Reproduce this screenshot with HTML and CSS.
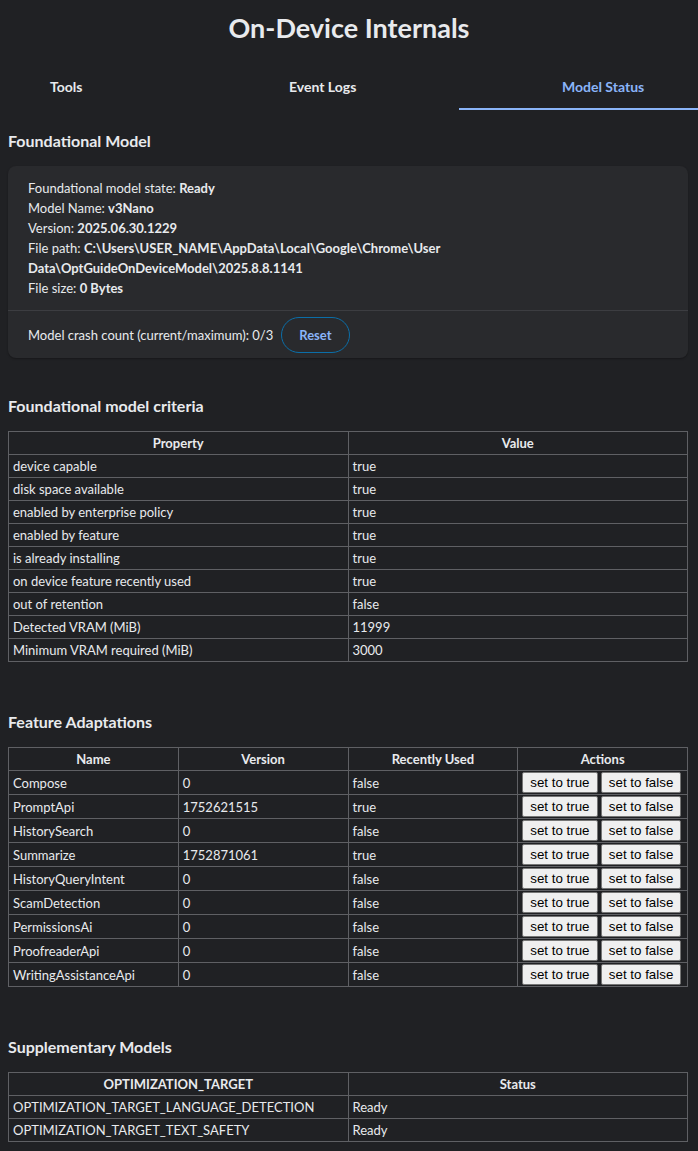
FILE: index.html
```html
<!DOCTYPE html>
<html>
<head>
<meta charset="utf-8">
<link rel="stylesheet" href="styles.css">
</head>
<body>
<h1 class="title">On-Device Internals</h1>
<div class="tabs">
  <div class="tab tab-tools">Tools</div>
  <div class="tab tab-logs">Event Logs</div>
  <div class="tab tab-status active">Model Status</div>
</div>
<main class="content">
  <h2 class="heading first">Foundational Model</h2>
  <div class="card">
    <div class="card-body">
      <div>Foundational model state: <b>Ready</b></div>
      <div>Model Name: <b>v3Nano</b></div>
      <div>Version: <b>2025.06.30.1229</b></div>
      <div>File path: <b>C:\Users\USER_NAME\AppData\Local\Google\Chrome\User Data\OptGuideOnDeviceModel\2025.8.8.1141</b></div>
      <div>File size: <b>0 Bytes</b></div>
    </div>
    <div class="card-foot">
      <span>Model crash count (current/maximum): 0/3</span>
      <button class="reset">Reset</button>
    </div>
  </div>

  <h2 class="heading">Foundational model criteria</h2>
  <table class="grid">
    <thead><tr><th>Property</th><th>Value</th></tr></thead>
    <tbody>
      <tr><td>device capable</td><td>true</td></tr>
      <tr><td>disk space available</td><td>true</td></tr>
      <tr><td>enabled by enterprise policy</td><td>true</td></tr>
      <tr><td>enabled by feature</td><td>true</td></tr>
      <tr><td>is already installing</td><td>true</td></tr>
      <tr><td>on device feature recently used</td><td>true</td></tr>
      <tr><td>out of retention</td><td>false</td></tr>
      <tr><td>Detected VRAM (MiB)</td><td>11999</td></tr>
      <tr><td>Minimum VRAM required (MiB)</td><td>3000</td></tr>
    </tbody>
  </table>

  <h2 class="heading wide">Feature Adaptations</h2>
  <table class="grid features">
    <thead><tr><th>Name</th><th>Version</th><th>Recently Used</th><th>Actions</th></tr></thead>
    <tbody>
      <tr><td>Compose</td><td>0</td><td>false</td><td class="actions"><button class="btn">set to true</button> <button class="btn">set to false</button></td></tr>
      <tr><td>PromptApi</td><td>1752621515</td><td>true</td><td class="actions"><button class="btn">set to true</button> <button class="btn">set to false</button></td></tr>
      <tr><td>HistorySearch</td><td>0</td><td>false</td><td class="actions"><button class="btn">set to true</button> <button class="btn">set to false</button></td></tr>
      <tr><td>Summarize</td><td>1752871061</td><td>true</td><td class="actions"><button class="btn">set to true</button> <button class="btn">set to false</button></td></tr>
      <tr><td>HistoryQueryIntent</td><td>0</td><td>false</td><td class="actions"><button class="btn">set to true</button> <button class="btn">set to false</button></td></tr>
      <tr><td>ScamDetection</td><td>0</td><td>false</td><td class="actions"><button class="btn">set to true</button> <button class="btn">set to false</button></td></tr>
      <tr><td>PermissionsAi</td><td>0</td><td>false</td><td class="actions"><button class="btn">set to true</button> <button class="btn">set to false</button></td></tr>
      <tr><td>ProofreaderApi</td><td>0</td><td>false</td><td class="actions"><button class="btn">set to true</button> <button class="btn">set to false</button></td></tr>
      <tr><td>WritingAssistanceApi</td><td>0</td><td>false</td><td class="actions"><button class="btn">set to true</button> <button class="btn">set to false</button></td></tr>
    </tbody>
  </table>

  <h2 class="heading wide">Supplementary Models</h2>
  <table class="grid">
    <thead><tr><th>OPTIMIZATION_TARGET</th><th>Status</th></tr></thead>
    <tbody>
      <tr><td>OPTIMIZATION_TARGET_LANGUAGE_DETECTION</td><td>Ready</td></tr>
      <tr><td>OPTIMIZATION_TARGET_TEXT_SAFETY</td><td>Ready</td></tr>
    </tbody>
  </table>
</main>
</body>
</html>
```

FILE: styles.css
```css
html, body {
  margin: 0;
  padding: 0;
  background: #202124;
  color: #e8eaed;
  font-family: Lato, "Open Sans", sans-serif;
  font-size: 13px;
}

.title {
  margin: 0;
  height: 56px;
  line-height: 56px;
  text-align: center;
  font-size: 27px;
  font-weight: 700;
  color: #e8eaed;
}

.tabs {
  display: flex;
  margin-top: 10px;
}

.tab {
  box-sizing: border-box;
  height: 44px;
  line-height: 42px;
  font-size: 14px;
  font-weight: 700;
  color: #e8eaed;
  border-bottom: 2px solid transparent;
}

.tab-tools { width: 229px; padding-left: 50px; }
.tab-logs { width: 230px; padding-left: 60px; }
.tab-status { width: 239px; padding-left: 103px; }

.tab.active {
  color: #8ab4f8;
  border-bottom-color: #8ab4f8;
}

.content {
  padding: 0 10px 0 8px;
}

.heading {
  margin: 50px 0 15px;
  font-size: 16px;
  line-height: 20px;
  font-weight: 700;
}

.heading.first { margin-top: 21px; }
.card + .heading { margin-top: 38px; }
.heading.wide { margin-top: 50px; }

.card {
  background: #292a2d;
  border-radius: 8px;
  box-shadow: 0 1px 2px rgba(0,0,0,0.3);
}

.card-body {
  padding: 12px 20px;
  line-height: 20px;
  border-bottom: 1px solid #3c3d41;
}

.card-body b { font-weight: 700; }

.card-foot {
  display: flex;
  align-items: center;
  gap: 8px;
  padding: 6px 20px 5px;
}

.reset {
  height: 36px;
  padding: 0 17px;
  border-radius: 18px;
  border: 1px solid #0b6ea8;
  background: transparent;
  color: #8ab4f8;
  font-family: inherit;
  font-size: 13px;
  font-weight: 700;
}

.grid {
  width: 100%;
  border-collapse: collapse;
  table-layout: fixed;
}

.grid th, .grid td {
  border: 1px solid #5f6064;
  padding: 2px 4px;
  height: 18px;
  line-height: 18px;
  text-align: left;
  font-size: 13px;
}

.grid th {
  text-align: center;
  font-weight: 700;
}

.features td {
  height: 23px;
  padding-top: 0;
  padding-bottom: 0;
}

.features th { height: 18px; }

.actions {
  white-space: nowrap;
}

.btn {
  box-sizing: border-box;
  vertical-align: middle;
  font-family: "Liberation Sans", Arial, sans-serif;
  font-size: 13.33px;
  color: #000;
  background: #efefef;
  border: 1px solid #767676;
  border-radius: 2px;
  padding: 0 7px;
  height: 21px;
  line-height: 19px;
}
```
